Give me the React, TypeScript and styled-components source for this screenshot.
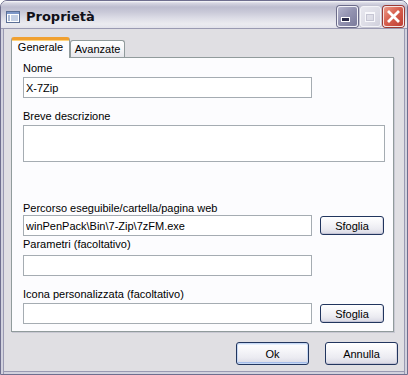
import React from 'react';
import styled, { createGlobalStyle } from 'styled-components';

const GlobalStyle = createGlobalStyle`
  html, body {
    margin: 0;
    padding: 0;
    background: #ffffff;
  }
  body {
    font-family: "Liberation Sans", Arial, sans-serif;
    font-size: 11px;
    color: #000;
  }
`;

const Window = styled.div`
  width: 408px;
  height: 375px;
  box-sizing: border-box;
  display: flex;
  flex-direction: column;
  border: 1px solid #6f6f8f;
  border-radius: 7px 7px 0 0;
  overflow: hidden;
  background: #e0dfe3;
`;

const TitleBar = styled.div`
  height: 27px;
  flex: none;
  box-sizing: border-box;
  display: flex;
  align-items: center;
  padding: 4px 3px 0 4px;
  background: linear-gradient(
    #fbfbfd 0px,
    #d6d6e2 2px,
    #bdbdcf 6px,
    #c9c9d8 11px,
    #dcdce6 17px,
    #ebebf0 23px,
    #e2e2ea 27px
  );
`;

const TitleIcon = styled.svg`
  width: 16px;
  height: 16px;
  flex: none;
  margin-right: 5px;
`;

const TitleText = styled.span`
  flex: 1;
  font-family: "DejaVu Sans", Verdana, sans-serif;
  font-weight: bold;
  font-size: 13px;
  line-height: 16px;
  color: #101018;
`;

const CaptionButton = styled.div<{ $kind: 'min' | 'max' | 'close' }>`
  width: 21px;
  height: 21px;
  box-sizing: border-box;
  margin-left: 2px;
  border-radius: 3px;
  display: flex;
  align-items: center;
  justify-content: center;
  border: 1px solid
    ${({ $kind }) => ($kind === 'max' ? '#f4f4f8' : $kind === 'close' ? '#f6e6e4' : '#f2f2f8')};
  box-shadow: 0 0 0 1px
    ${({ $kind }) => ($kind === 'max' ? '#c4c4d2' : $kind === 'close' ? '#9c3a34' : '#6c6c8a')};
  background: ${({ $kind }) =>
    $kind === 'min'
      ? 'linear-gradient(135deg, #b4b4cc 0%, #9494b2 45%, #7c7c9c 100%)'
      : $kind === 'max'
        ? 'linear-gradient(135deg, #e8e8ef 0%, #dcdce6 60%, #d0d0dc 100%)'
        : 'linear-gradient(135deg, #ec9a88 0%, #d7604f 45%, #bf3e34 100%)'};
`;

const Body = styled.div`
  flex: 1;
  display: flex;
  flex-direction: column;
  padding: 9px 0 0 10px;
  box-shadow:
    inset 0 1px 0 #9a9ab2,
    inset 2px 0 0 #d2d2de,
    inset 3px 0 0 #9a9ab2,
    inset -2px 0 0 #d2d2de,
    inset -3px 0 0 #9a9ab2,
    inset 0 -2px 0 #d2d2de,
    inset 0 -3px 0 #9a9ab2;
`;

const TabRow = styled.div`
  display: flex;
  align-items: flex-end;
  height: 20px;
`;

const Tab = styled.div<{ $active?: boolean; $width: number }>`
  position: relative;
  z-index: ${({ $active }) => ($active ? 2 : 1)};
  width: ${({ $width }) => $width}px;
  box-sizing: border-box;
  height: ${({ $active }) => ($active ? 21 : 17)}px;
  margin-bottom: ${({ $active }) => ($active ? -1 : 0)}px;
  padding-top: ${({ $active }) => ($active ? 1 : 2)}px;
  text-align: center;
  line-height: 13px;
  border: 1px solid #919b9c;
  border-bottom: none;
  border-top: ${({ $active }) => ($active ? '3px solid #f0a030' : '1px solid #919b9c')};
  border-radius: 3px 3px 0 0;
  background: ${({ $active }) =>
    $active ? '#fcfcfe' : 'linear-gradient(#ffffff 0%, #f6f6f8 50%, #e6e6ec 100%)'};
  ${({ $active }) => ($active ? 'box-shadow: inset 0 1px 0 #ffd27a;' : '')}
`;

const Panel = styled.div`
  width: 383px;
  height: 275px;
  box-sizing: border-box;
  border: 1px solid #919b9c;
  box-shadow: 1px 1px 0 #c8c8d2;
  background: #fcfcfe;
  padding: 4px 8px 0 11px;
  display: flex;
  flex-direction: column;
`;

const Label = styled.div<{ $top: number; $gap: number }>`
  margin-top: ${({ $top }) => $top}px;
  margin-bottom: ${({ $gap }) => $gap}px;
  line-height: 13px;
  height: 13px;
  white-space: nowrap;
`;

const FieldRow = styled.div`
  display: flex;
  align-items: center;
  gap: 8px;
`;

const TextInput = styled.input`
  width: 289px;
  height: 21px;
  box-sizing: border-box;
  margin: 0;
  padding: 0 2px;
  border: 1px solid #a5acb2;
  background: #ffffff;
  font-family: "Liberation Sans", Arial, sans-serif;
  font-size: 11px;
  color: #000;
  outline: none;
`;

const TextArea = styled.textarea`
  width: 362px;
  height: 37px;
  box-sizing: border-box;
  margin: 0;
  padding: 2px;
  border: 1px solid #a5acb2;
  background: #ffffff;
  resize: none;
  font-family: "Liberation Sans", Arial, sans-serif;
  font-size: 11px;
  outline: none;
  display: block;
`;

const Button = styled.button<{ $width: number; $height: number; $default?: boolean }>`
  width: ${({ $width }) => $width}px;
  height: ${({ $height }) => $height}px;
  box-sizing: border-box;
  margin: 0;
  padding: 0;
  border: 1px solid #21355e;
  border-radius: 3px;
  font-family: "Liberation Sans", Arial, sans-serif;
  font-size: 11px;
  color: #000;
  background: linear-gradient(#ffffff 0%, #f6f6f9 35%, #ebebf1 70%, #d8d8e4 100%);
  box-shadow: ${({ $default }) =>
    $default
      ? 'inset 0 0 0 1px #c6d8f4, inset 0 -2px 0 #a4bcea, inset 0 2px 0 #e6effc'
      : 'inset 0 -1px 0 #c4c4d6, inset -1px 0 0 #d8d8e4'};
`;

const Footer = styled.div`
  display: flex;
  justify-content: flex-end;
  gap: 16px;
  margin-top: 10px;
  padding-right: 9px;
`;

export default function App() {
  return (
    <>
      <GlobalStyle />
      <Window>
        <TitleBar>
          <TitleIcon viewBox="0 0 16 16">
            <rect x="1.5" y="2.5" width="13" height="11" fill="#ffffff" stroke="#5b6f96" />
            <rect x="2" y="3" width="12" height="2" fill="#7d97c8" />
            <rect x="3" y="6.5" width="2" height="1" fill="#5a78b0" />
            <rect x="6" y="6.5" width="7" height="1" fill="#8aa2cc" />
            <rect x="3" y="8.5" width="2" height="1" fill="#5a78b0" />
            <rect x="6" y="8.5" width="7" height="1" fill="#8aa2cc" />
            <rect x="3" y="10.5" width="2" height="1" fill="#5a78b0" />
            <rect x="6" y="10.5" width="7" height="1" fill="#8aa2cc" />
          </TitleIcon>
          <TitleText>Proprietà</TitleText>
          <CaptionButton $kind="min">
            <svg width="19" height="19" viewBox="0 0 19 19">
              <rect x="3.5" y="10.5" width="8" height="4" fill="#2a2a48" stroke="#ffffff" />
            </svg>
          </CaptionButton>
          <CaptionButton $kind="max">
            <svg width="19" height="19" viewBox="0 0 19 19">
              <rect x="4.5" y="5.5" width="9" height="9" fill="none" stroke="#f8f8fc" />
              <rect x="4" y="5" width="10" height="2" fill="#f8f8fc" />
              <rect x="5.5" y="7.5" width="7" height="6" fill="none" stroke="#c6c6d4" />
            </svg>
          </CaptionButton>
          <CaptionButton $kind="close">
            <svg width="19" height="19" viewBox="0 0 19 19">
              <path d="M4 4 L15 15 M15 4 L4 15" stroke="#ffffff" strokeWidth="2.8" />
            </svg>
          </CaptionButton>
        </TitleBar>
        <Body>
          <TabRow>
            <Tab $active $width={59}>Generale</Tab>
            <Tab $width={55}>Avanzate</Tab>
          </TabRow>
          <Panel>
            <Label $top={0} $gap={2}>Nome</Label>
            <TextInput readOnly value="X-7Zip" />

            <Label $top={12} $gap={2}>Breve descrizione</Label>
            <TextArea readOnly value="" />

            <Label $top={40} $gap={0}>Percorso eseguibile/cartella/pagina web</Label>
            <FieldRow>
              <TextInput readOnly value="winPenPack\Bin\7-Zip\7zFM.exe" />
              <Button $width={64} $height={19}>Sfoglia</Button>
            </FieldRow>

            <Label $top={2} $gap={4}>Parametri (facoltativo)</Label>
            <TextInput readOnly value="" />

            <Label $top={12} $gap={2}>Icona personalizzata (facoltativo)</Label>
            <FieldRow>
              <TextInput readOnly value="" />
              <Button $width={64} $height={19}>Sfoglia</Button>
            </FieldRow>
          </Panel>
          <Footer>
            <Button $width={73} $height={23} $default>Ok</Button>
            <Button $width={73} $height={23}>Annulla</Button>
          </Footer>
        </Body>
      </Window>
    </>
  );
}
